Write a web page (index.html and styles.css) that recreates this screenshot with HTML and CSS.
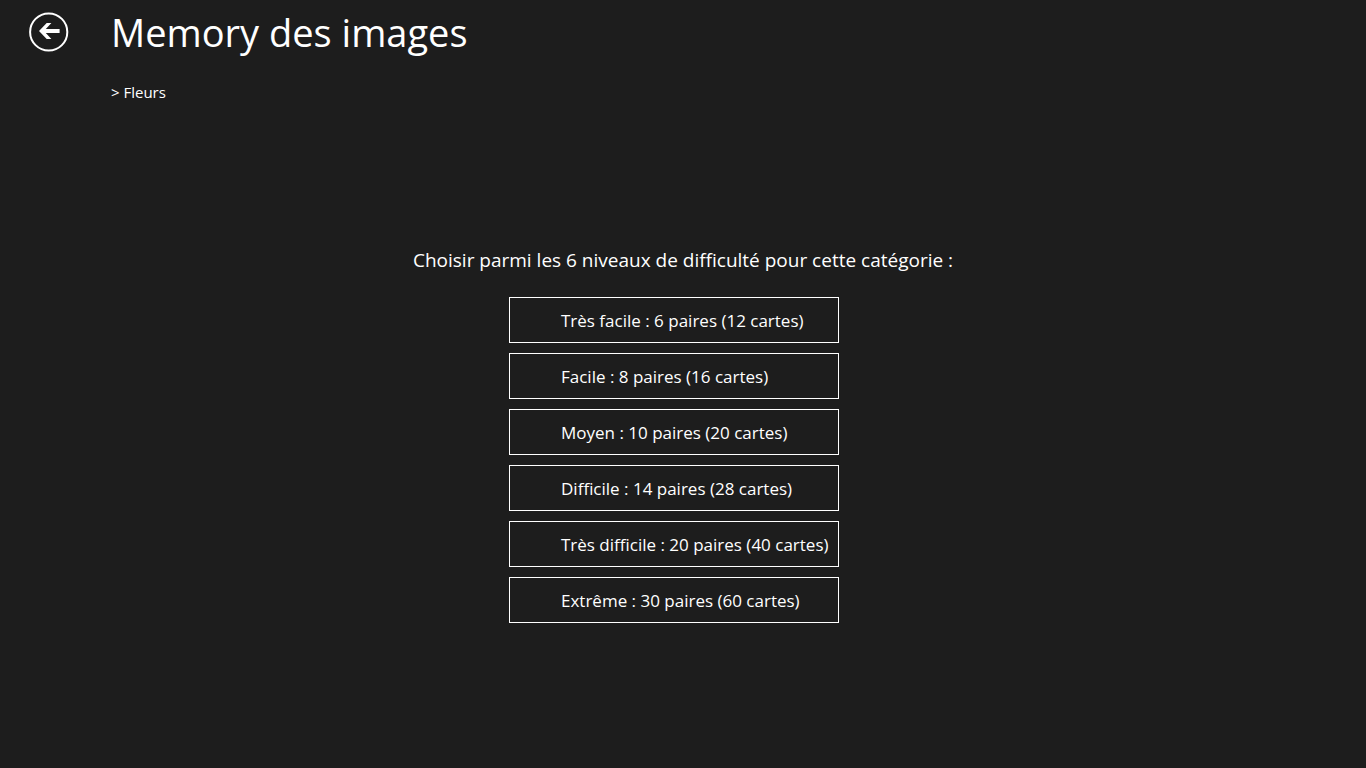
FILE: index.html
```html
<!DOCTYPE html>
<html lang="fr">
<head>
    <meta charset="UTF-8">
    <meta name="viewport" content="width=device-width, initial-scale=1.0">
    <title>Memory des images</title>
    <link rel="stylesheet" href="styles.css">
</head>
<body>
    <header class="header">
        <button class="back" type="button" aria-label="Retour">
            <svg viewBox="0 0 40 40" width="40" height="40">
                <circle cx="19.7" cy="20" r="18.6" fill="none" stroke="#fff" stroke-width="2"/>
                <path d="M10 19 L17.7 11 H22.4 L16.8 17.1 H30.6 V20.9 H16.8 L22.4 27.1 H17.7 Z" fill="#fff"/>
            </svg>
        </button>
        <div class="titles">
            <h1>Memory des images</h1>
            <p class="category">&gt; Fleurs</p>
        </div>
    </header>

    <main class="content">
        <h2>Choisir parmi les 6 niveaux de difficulté pour cette catégorie :</h2>
        <div class="levels">
            <button type="button">Très facile : 6 paires (12 cartes)</button>
            <button type="button">Facile : 8 paires (16 cartes)</button>
            <button type="button">Moyen : 10 paires (20 cartes)</button>
            <button type="button">Difficile : 14 paires (28 cartes)</button>
            <button type="button">Très difficile : 20 paires (40 cartes)</button>
            <button type="button">Extrême : 30 paires (60 cartes)</button>
        </div>
    </main>
</body>
</html>
```
FILE: styles.css
```css
* { box-sizing: border-box; }
body { margin: 0; min-height: 100vh; background: #1d1d1d; color: #fff; font-family: "Segoe UI", "Open Sans", "Noto Sans", sans-serif; }
h1, h2, p { margin: 0; font-weight: 400; }
.header { display: flex; gap: 42px; padding: 4px 29px 0; }
.back { width: 40px; height: 40px; margin-top: 8px; padding: 0; border: none; background: none; cursor: pointer; }
.back svg { display: block; }
h1 { font-size: 38px; line-height: 56px; }
.category { margin-top: 20px; font-size: 15px; line-height: 24px; }
.content { display: flex; flex-direction: column; align-items: center; padding-top: 140px; }
h2 { font-size: 19px; line-height: 32px; }
.levels { display: flex; flex-direction: column; gap: 10px; width: 330px; margin: 21px 18px 0 0; }
.levels button { height: 46px; padding: 0 0 0 51px; border: 1px solid #fff; background: none; color: #fff; font-family: inherit; font-size: 17px; text-align: left; white-space: nowrap; cursor: pointer; }
.levels button:hover { background: #3a3a3a; }
```
